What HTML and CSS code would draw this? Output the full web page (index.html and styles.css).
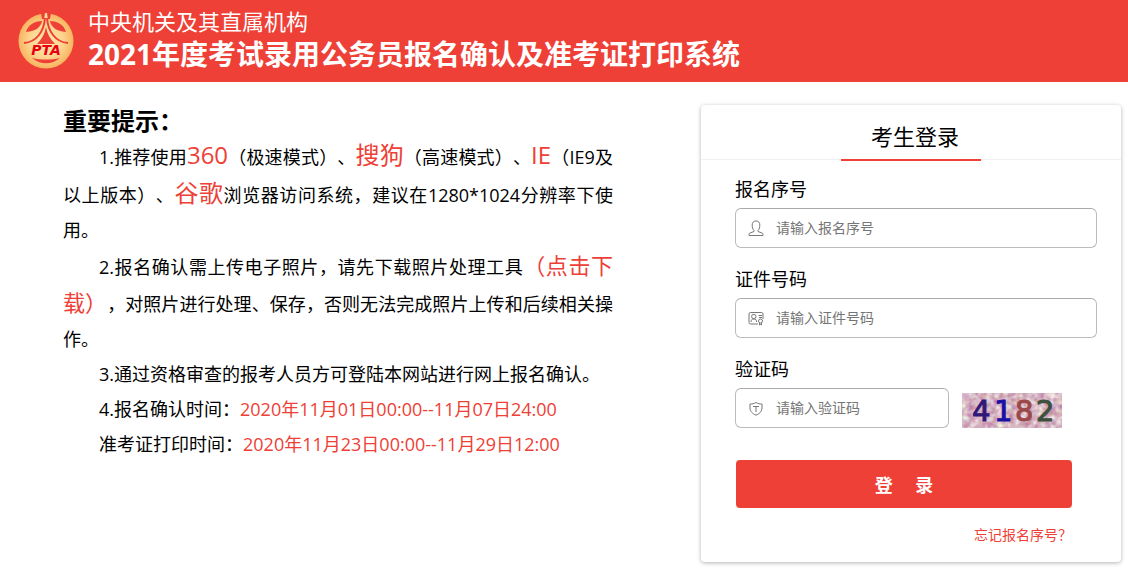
FILE: index.html
```html
<!DOCTYPE html>
<html lang="zh-CN">
<head>
  <meta charset="UTF-8">
  <meta name="viewport" content="width=device-width, initial-scale=1">
  <title>报名确认及准考证打印系统</title>

  <link rel="stylesheet" href="styles.css">
</head>

<body>

<header class="header">
  <svg class="header__logo" viewBox="0 0 56 56" aria-hidden="true">
    <defs>
      <radialGradient id="gold">
        <stop offset="0" stop-color="#ffe9ae"/>
        <stop offset=".6" stop-color="#fdd590"/>
        <stop offset="1" stop-color="#f8b460"/>
      </radialGradient>
    </defs>
    <circle cx="28" cy="28" r="27.500" fill="url(#gold)"/>
    <g fill="#ee4036">
      <path d="M23 0h10l-1 6h-8z"/>
      <path d="M8 19C10 12 16 8 24 8c-1 6-6 10-16 11z"/>
      <path d="M48 19C46 12 40 8 32 8c1 6 6 10 16 11z"/>
      <path d="M28 14c1 6 4 12 9 17H19c5-5 8-11 9-17z"/>
      <path d="M14 45c8 7 20 7 28 0-8 2-20 2-28 0z"/>
    </g>
    <path d="M28 0c-.5 5-1 8-2 12M28 0c.5 5 1 8 2 12" fill="none" stroke="#ffdc9c" stroke-width="2"/>
    <path d="M27 5C26 18 19 29 6 30M29 5c1 13 8 24 21 25" fill="none" stroke="#ee4036" stroke-width="2"/>
    <text class="header__logo-text" x="28" y="42" text-anchor="middle">PTA</text>
  </svg>
  <div>
    <p class="header__org">中央机关及其直属机构</p>
    <h1 class="header__title">2021年度考试录用公务员报名确认及准考证打印系统</h1>
  </div>
</header>

<main class="main">

  <section class="notice">
    <h2 class="notice__title">重要提示：</h2>
    <p>1.推荐使用<span class="browser">360</span>（极速模式）、<span class="browser">搜狗</span>（高速模式）、<span class="browser">IE</span>（IE9及以上版本）、<span class="browser">谷歌</span>浏览器访问系统，建议在1280*1024分辨率下使用。</p>
    <p>2.报名确认需上传电子照片，请先下载照片处理工具<a class="download" href="#">（点击下载）</a>，对照片进行处理、保存，否则无法完成照片上传和后续相关操作。</p>
    <p>3.通过资格审查的报考人员方可登陆本网站进行网上报名确认。</p>
    <p>4.报名确认时间：<span class="text-red">2020年11月01日00:00--11月07日24:00</span></p>
    <p>准考证打印时间：<span class="text-red">2020年11月23日00:00--11月29日12:00</span></p>
  </section>

  <section class="login">
    <div class="login__head">
      <h2 class="login__tab">考生登录</h2>
    </div>
    <form class="login__form">
      <div class="field">
        <label for="number">报名序号</label>
        <div class="field__box">
          <svg class="field__icon" viewBox="0 0 16 16" aria-hidden="true">
            <path d="M6 10.500C4.500 9 4.200 7 4.200 5 4.200 2.500 5.500 1 8 1s3.800 1.500 3.800 4c0 2-.3 4-1.800 5.500v1l4 1.500c.8.300 1 .8 1 1.700v.8H1v-.8c0-.9.2-1.400 1-1.700l4-1.500z"/>
          </svg>
          <input id="number" type="text" placeholder="请输入报名序号">
        </div>
      </div>
      <div class="field">
        <label for="card">证件号码</label>
        <div class="field__box">
          <svg class="field__icon" viewBox="0 0 16 16" aria-hidden="true">
            <path d="M10 14H2.500A1.500 1.500 0 0 1 1 12.500V4a1.500 1.500 0 0 1 1.500-1.500h11A1.500 1.500 0 0 1 15 4v5M10.500 5.500H14M11 7.500h3M3 12c0-2 .8-3 2.800-3s2.800 1 2.800 3"/>
            <circle cx="5.800" cy="6.500" r="2.200"/>
            <circle cx="12.500" cy="11" r="2"/>
            <path d="M11.500 13v2l1-.5 1 .5v-2"/>
          </svg>
          <input id="card" type="text" placeholder="请输入证件号码">
        </div>
      </div>
      <div class="field">
        <label for="code">验证码</label>
        <div class="field__row">
          <div class="field__box field__box--short">
            <svg class="field__icon" viewBox="0 0 16 16" aria-hidden="true">
              <path d="M8 2.500c2 1.200 3.800 1.500 6 1.500v4c0 3.500-2.500 5.700-6 7.200C4.500 13.700 2 11.500 2 8V4c2.200 0 4-.3 6-1.500zM5 6.500h6M8 6.500V12"/>
            </svg>
            <input id="code" type="text" placeholder="请输入验证码">
          </div>
          <svg class="captcha" viewBox="0 0 100 35" role="img" aria-label="验证码图片">
            <filter id="noise" x="0" y="0" width="100%" height="100%" color-interpolation-filters="sRGB">
              <feTurbulence type="fractalNoise" baseFrequency=".17" numOctaves="2" seed="4"/>
              <feColorMatrix values=".1 .3 0 0 .64  0 .65 0 0 .38  0 .4 .2 0 .46  0 0 0 0 1"/>
            </filter>
            <rect width="100" height="35" filter="url(#noise)"/>
            <text x="10" y="28" fill="#301878" stroke="#301878">4</text>
            <text x="32" y="28" fill="#1a10a4" stroke="#1a10a4">1</text>
            <text x="53" y="28" fill="#9a4848" stroke="#9a4848">8</text>
            <text x="74" y="28" fill="#3c503c" stroke="#3c503c">2</text>
          </svg>
        </div>
      </div>
      <button class="login__button" type="submit">登&emsp;&nbsp;录</button>
      <a class="login__forgot" href="#">忘记报名序号？</a>
    </form>
  </section>

</main>

</body>
</html>
```

FILE: styles.css
```css
* { box-sizing: border-box; }

body {
  margin: 0;
  font-family: "Open Sans", "Noto Sans CJK SC", sans-serif;
  font-size: 18px;
  text-spacing-trim: space-all;
  color: #000;
  background-color: #fff;
}

h1,
h2,
p { margin: 0; }

a { text-decoration: none; }

.text-red { color: #ee4036; }


/* Header */

.header {
  display: flex;
  align-items: center;
  gap: 14px;
  min-height: 82px;
  padding: 0 18px;
  color: #fff;
  background-color: #ee4036;
}

.header__logo {
  flex: none;
  width: 56px;
  height: 56px;
}

.header__logo-text {
  font: italic bold 14px "DejaVu Sans", sans-serif;
  fill: #e60012;
}

.header__org {
  font-size: 22px;
  line-height: 28px;
}

.header__title {
  padding-bottom: 2px;
  font-size: 28px;
  line-height: 38px;
}


/* Content */

.main {
  display: flex;
  justify-content: space-between;
  align-items: flex-start;
  padding: 23px 7px 18px 63px;
}

.notice {
  flex: 0 1 550px;
  line-height: 35px;
}

.notice p {
  text-indent: 2em;
  text-align: justify;
}

.notice__title {
  font-size: 24px;
  line-height: 32px;
}

.browser {
  font-size: 24px;
  color: #ee4036;
}

.download {
  font-size: 22px;
  color: #ee4036;
}


/* Login */

.login {
  flex: 0 0 420px;
  border-radius: 4px;
  background-color: #fff;
  box-shadow: 0 1px 4px rgba(0, 0, 0, .3);
}

.login__head {
  display: flex;
  justify-content: center;
  height: 55px;
  border-bottom: 1px solid #f2f2f2;
}

.login__tab {
  height: 56px;
  padding: 0 22px 0 30px;
  font-size: 22px;
  font-weight: normal;
  line-height: 62px;
  border-bottom: 2px solid #ee4036;
}

.login__form {
  display: flex;
  flex-direction: column;
  padding: 10px 24px 16px 34px;
}

.field { margin-bottom: 12px; }

.field label {
  display: block;
  line-height: 38px;
}

.field__row {
  display: flex;
  gap: 13px;
}

.field__box {
  display: flex;
  align-items: center;
  height: 40px;
  padding: 0 12px;
  border: 1px solid #bbb;
  border-top-color: #aaa;
  border-radius: 6px;
}

.field__box--short { width: 214px; }

.field__icon {
  flex: none;
  width: 16px;
  height: 16px;
  fill: none;
  stroke: #777;
}

.field__box input {
  flex: 1;
  min-width: 0;
  padding: 0 0 2px 12px;
  font: inherit;
  font-size: 14px;
  border: 0;
  outline: 0;
  background: none;
}

.field__box input::placeholder { color: #757575; }

.captcha {
  align-self: flex-end;
  width: 100px;
  height: 35px;
  font: 29px "DejaVu Sans", sans-serif;
}

.login__button {
  height: 48px;
  margin: 20px 25px 0 1px;
  font: inherit;
  font-weight: bold;
  color: #fff;
  border: 0;
  border-radius: 4px;
  background-color: #ee4036;
}

.login__forgot {
  align-self: flex-end;
  margin: 16px 25px 0 0;
  font-size: 14px;
  line-height: 22px;
  color: #ee4036;
}
```
